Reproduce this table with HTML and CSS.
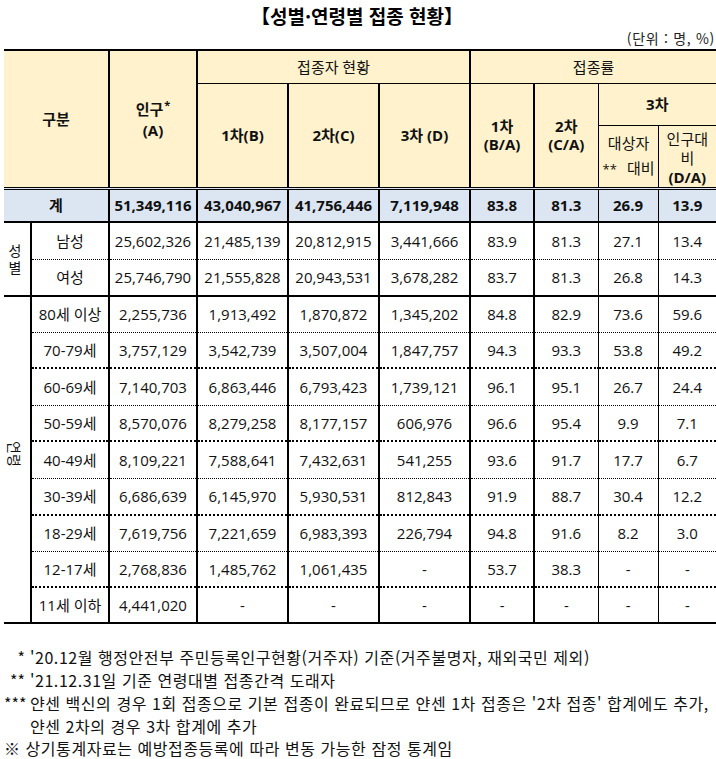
FILE: index.html
```html
<!DOCTYPE html>
<html lang="ko">
<head>
<meta charset="utf-8">
<title>성별·연령별 접종 현황</title>
<link rel="stylesheet" href="styles.css">
</head>
<body>
<div class="page">
  <h1 class="title">【성별·연령별 접종 현황】</h1>
  <div class="unit">(단위 : 명, %)</div>
  <table class="stat">
    <colgroup>
      <col class="w0"><col class="w1"><col class="w2"><col class="w3"><col class="w3">
      <col class="w3"><col class="w6"><col class="w6"><col class="w8"><col class="w9">
    </colgroup>
    <thead>
      <tr class="h1">
        <th class="first" colspan="2" rowspan="3">구분</th>
        <th rowspan="3" class="pop">인구<sup>*</sup><br>(A)</th>
        <th colspan="3" class="reg line">접종자 현황</th>
        <th colspan="4" class="reg line">접종률</th>
      </tr>
      <tr class="h2">
        <th rowspan="2">1차(B)</th>
        <th rowspan="2">2차(C)</th>
        <th rowspan="2">3차 (D)</th>
        <th rowspan="2" class="two">1차<br>(B/A)</th>
        <th rowspan="2" class="two">2차<br>(C/A)</th>
        <th colspan="2" class="thin line">3차</th>
      </tr>
      <tr class="h3">
        <th class="thin reg tgt"><span class="l1">대상자</span><span class="l2"><span>**</span><span>대비</span></span></th>
        <th class="thin reg pd">인구대<br>비<br><b>(D/A)</b></th>
      </tr>
    </thead>
    <tbody>
      <tr class="total">
        <td class="first" colspan="2">계</td>
        <td>51,349,116</td><td>43,040,967</td><td>41,756,446</td><td>7,119,948</td>
        <td>83.8</td><td>81.3</td><td>26.9</td><td>13.9</td>
      </tr>
      <tr class="male">
        <td class="first side" rowspan="2"><span class="upright">성<br>별</span></td>
        <td>남성</td><td>25,602,326</td><td>21,485,139</td><td>20,812,915</td><td>3,441,666</td>
        <td>83.9</td><td>81.3</td><td>27.1</td><td>13.4</td>
      </tr>
      <tr class="female">
        <td>여성</td><td>25,746,790</td><td>21,555,828</td><td>20,943,531</td><td>3,678,282</td>
        <td>83.7</td><td>81.3</td><td>26.8</td><td>14.3</td>
      </tr>
      <tr class="age thin-dot r36">
        <td class="first side age-side" rowspan="9"><span class="rot">연령</span></td>
        <td>80세 이상</td><td>2,255,736</td><td>1,913,492</td><td>1,870,872</td><td>1,345,202</td>
        <td>84.8</td><td>82.9</td><td>73.6</td><td>59.6</td>
      </tr>
      <tr class="age thick-dot r36">
        <td>70-79세</td><td>3,757,129</td><td>3,542,739</td><td>3,507,004</td><td>1,847,757</td>
        <td>94.3</td><td>93.3</td><td>53.8</td><td>49.2</td>
      </tr>
      <tr class="age thin-dot r37">
        <td>60-69세</td><td>7,140,703</td><td>6,863,446</td><td>6,793,423</td><td>1,739,121</td>
        <td>96.1</td><td>95.1</td><td>26.7</td><td>24.4</td>
      </tr>
      <tr class="age thick-dot r36">
        <td>50-59세</td><td>8,570,076</td><td>8,279,258</td><td>8,177,157</td><td>606,976</td>
        <td>96.6</td><td>95.4</td><td>9.9</td><td>7.1</td>
      </tr>
      <tr class="age thin-dot r37">
        <td>40-49세</td><td>8,109,221</td><td>7,588,641</td><td>7,432,631</td><td>541,255</td>
        <td>93.6</td><td>91.7</td><td>17.7</td><td>6.7</td>
      </tr>
      <tr class="age thick-dot r37">
        <td>30-39세</td><td>6,686,639</td><td>6,145,970</td><td>5,930,531</td><td>812,843</td>
        <td>91.9</td><td>88.7</td><td>30.4</td><td>12.2</td>
      </tr>
      <tr class="age thin-dot r36">
        <td>18-29세</td><td>7,619,756</td><td>7,221,659</td><td>6,983,393</td><td>226,794</td>
        <td>94.8</td><td>91.6</td><td>8.2</td><td>3.0</td>
      </tr>
      <tr class="age thick-dot r36">
        <td>12-17세</td><td>2,768,836</td><td>1,485,762</td><td>1,061,435</td><td>-</td>
        <td>53.7</td><td>38.3</td><td>-</td><td>-</td>
      </tr>
      <tr class="age last r36">
        <td>11세 이하</td><td>4,441,020</td><td>-</td><td>-</td><td>-</td>
        <td>-</td><td>-</td><td>-</td><td>-</td>
      </tr>
    </tbody>
  </table>
  <div class="notes">
    <div class="note"><span class="mk">*</span><span class="tx">'20.12월 행정안전부 주민등록인구현황(거주자) 기준(거주불명자, 재외국민 제외)</span></div>
    <div class="note"><span class="mk">**</span><span class="tx">'21.12.31일 기준 연령대별 접종간격 도래자</span></div>
    <div class="note"><span class="mk">***</span><span class="tx">얀센 백신의 경우 1회 접종으로 기본 접종이 완료되므로 얀센 1차 접종은 '2차 접종' 합계에도 추가,</span></div>
    <div class="note"><span class="mk"></span><span class="tx">얀센 2차의 경우 3차 합계에 추가</span></div>
    <div class="note plain">※ 상기통계자료는 예방접종등록에 따라 변동 가능한 잠정 통계임</div>
  </div>
</div>
</body>
</html>
```

FILE: styles.css
```css
html, body {
  margin: 0;
  padding: 0;
  background: #fff;
}
body {
  font-family: "Noto Sans CJK KR", "Noto Sans", sans-serif;
  color: #111;
  width: 716px;
  overflow: hidden;
}
.page {
  padding-left: 4px;
}
.title {
  margin: 0;
  font-size: 19px;
  font-weight: 700;
  line-height: 32px;
  height: 32px;
  text-align: center;
  padding-right: 6px;
  color: #000;
}
.unit {
  font-size: 14px;
  letter-spacing: 0.7px;
  line-height: 12px;
  height: 12px;
  text-align: right;
  padding-right: 1px;
  color: #222;
}
.stat {
  margin-top: 5px;
  border-collapse: collapse;
  table-layout: fixed;
  width: 712px;
  font-family: "Open Sans", "Noto Sans CJK KR", sans-serif;
  font-size: 15px;
  color: #111;
}
.w0 { width: 27px; }
.w1 { width: 78px; }
.w2 { width: 88px; }
.w3 { width: 91px; }
.w6 { width: 64px; }
.w8 { width: 60px; }
.w9 { width: 58px; }

.stat th, .stat td {
  padding: 0 1px;
  text-align: center;
  vertical-align: middle;
  border-left: 2px solid #000;
  white-space: nowrap;
}
.stat .first { border-left: none; }
.stat th {
  background: #fff2cc;
  font-weight: 700;
  line-height: 18px;
}
.stat th.reg { font-weight: 400; }
.stat th.thin { border-left-width: 1px; }
.stat th.line { border-bottom: 1px solid #000; }
.stat .h1 th { border-top: 2px solid #000; }
.stat .h1 { height: 33px; }
.stat .h2 { height: 42px; }
.stat .h3 { height: 61px; }
.stat th.pop { line-height: 21px; padding-top: 2px; }
.stat th sup {
  font-size: 11px;
  line-height: 0;
  vertical-align: 6px;
  margin-left: 1px;
}
.stat th.two { line-height: 18px; }
.stat th.tgt { padding: 0 3px 0 4px; }
.stat th.tgt .l1,
.stat th.tgt .l2 {
  display: flex;
  line-height: 25px;
}
.stat th.tgt .l1 { justify-content: center; }
.stat th.tgt .l2 { justify-content: space-between; align-items: baseline; }
.stat th.tgt .l2 span:first-child { font-size: 13px; }
.stat th.pd { line-height: 19px; padding-top: 4px; }
.stat th.pd b { font-weight: 700; }

.stat tbody td:nth-last-child(-n+2) { border-left-width: 1px; }
.stat tbody .side { border-left: none; }

.stat td { line-height: 20px; }
.stat .total td {
  background: #dce6f2;
  font-weight: 700;
  border-top: 3px double #000;
  border-bottom: 2px solid #000;
}
.stat .total { height: 34px; }
.stat .male, .stat .female { height: 37px; }
.stat .male td { border-bottom: 1px dotted #000; }
.stat .male td.side { border-bottom: 2px solid #000; }
.stat .female td { border-bottom: 2px solid #000; }
.stat .r36 { height: 36px; }
.stat .r37 { height: 37px; }
.stat .thin-dot td { border-bottom: 1px dotted #000; }
.stat .thick-dot td { border-bottom: 2px dotted #000; }
.stat .last td { border-bottom: 2px solid #000; }
.stat td.age-side { border-bottom: 2px solid #000; }

.upright {
  display: inline-block;
  font-family: "Noto Sans CJK KR", sans-serif;
  line-height: 17px;
  font-size: 14px;
  margin-right: 4px;
}
.rot {
  display: inline-block;
  writing-mode: vertical-rl;
  text-orientation: sideways;
  font-family: "Noto Sans CJK KR", sans-serif;
  font-size: 14px;
  line-height: 16px;
  margin-right: 4px;
  margin-bottom: 8px;
}

.notes {
  margin-top: 22px;
  font-size: 16px;
  letter-spacing: 0.55px;
  line-height: 23px;
  color: #111;
}
.note {
  display: flex;
  white-space: nowrap;
}
.note .mk {
  width: 21px;
  flex: none;
  text-align: right;
  margin-right: 5px;
  letter-spacing: 0;
}
.note.plain {
  display: block;
  line-height: 20px;
  white-space: nowrap;
}
```
